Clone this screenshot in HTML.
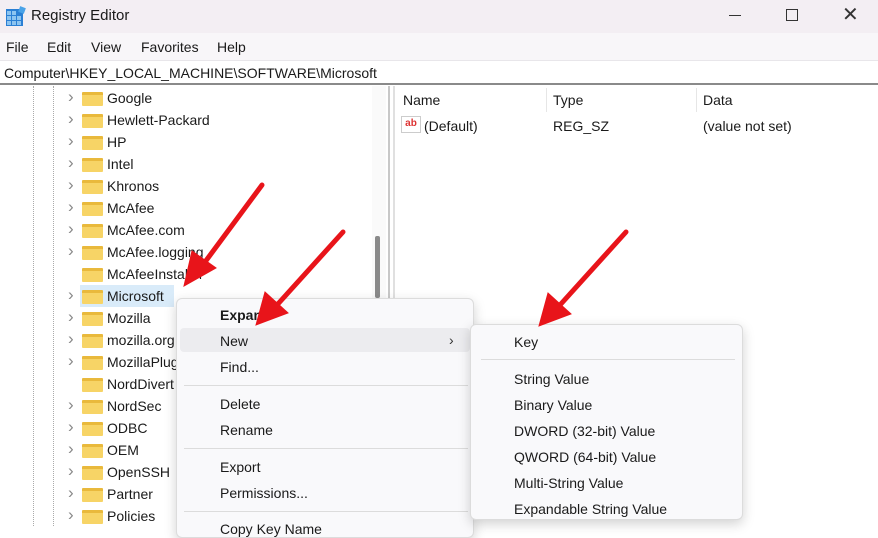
<!DOCTYPE html>
<html><head><meta charset="utf-8"><style>
*{margin:0;padding:0;box-sizing:border-box}
body{width:878px;height:526px;overflow:hidden;background:#fff;font-family:"Liberation Sans",sans-serif;font-size:14px;color:#1a1a1a;position:relative}
.abs{position:absolute;white-space:nowrap}
#title{left:0;top:0;width:878px;height:33px;background:#f3eef3}
#menu{left:0;top:33px;width:878px;height:27px;background:#f8f6f9}
#addr{left:0;top:60px;width:878px;height:25px;background:#fff;border-top:1px solid #e8e6ea;border-bottom:2px solid #8a8a8a}
.row{position:absolute;left:68px;height:22px;line-height:22px;white-space:nowrap}
.row .ch{position:absolute;left:0;top:-1px;color:#888;font-size:17px}
.row .fd{position:absolute;left:14px;top:5px;width:21px;height:14px;background:#f7d466;border-radius:1px;border-top:3px solid #e9b93c}
.row .t{position:absolute;left:39px;top:0;white-space:nowrap}
.cm{background:#f9f9fb;border:1px solid #dcdcdc;border-radius:6px;box-shadow:0 4px 12px rgba(0,0,0,.18)}
.mi{position:absolute;left:43px;white-space:nowrap}
.sep{position:absolute;height:1px;background:#dcdcdc}
</style></head><body>
<div id="title" class="abs">
<svg class="abs" style="left:6px;top:6px" width="20" height="20"><rect x="0" y="3" width="17" height="17" fill="#2a7fd4"/><g fill="#8cc4f0"><rect x="1" y="5" width="4" height="4"/><rect x="6" y="5" width="4" height="4"/><rect x="1" y="10" width="4" height="4"/><rect x="6" y="10" width="4" height="4"/><rect x="11" y="10" width="4" height="4"/><rect x="1" y="15" width="4" height="4"/><rect x="6" y="15" width="4" height="4"/><rect x="11" y="15" width="4" height="4"/></g><rect x="13" y="1" width="6" height="6" fill="#4aa3e8" transform="rotate(20 16 4)"/></svg>
<div class="abs" style="left:31px;top:7px;font-size:15px">Registry Editor</div>
<div class="abs" style="left:729px;top:15px;width:12px;height:1px;background:#333"></div>
<div class="abs" style="left:786px;top:9px;width:12px;height:12px;border:1px solid #333"></div>
<div class="abs" style="left:842px;top:2px;font-size:20px;color:#333">✕</div>
</div>
<div id="menu" class="abs">
<div class="abs" style="left:6px;top:6px">File</div>
<div class="abs" style="left:47px;top:6px">Edit</div>
<div class="abs" style="left:91px;top:6px">View</div>
<div class="abs" style="left:141px;top:6px">Favorites</div>
<div class="abs" style="left:217px;top:6px">Help</div>
</div>
<div id="addr" class="abs"><div class="abs" style="left:4px;top:4px;font-size:14px">Computer\HKEY_LOCAL_MACHINE\SOFTWARE\Microsoft</div></div>
<!-- tree -->
<div class="abs" style="left:33px;top:86px;height:440px;border-left:1px dotted #aaa"></div>
<div class="abs" style="left:53px;top:86px;height:440px;border-left:1px dotted #aaa"></div>
<div class="abs" style="left:372px;top:86px;width:14px;height:440px;background:#fafafa"></div>
<div class="abs" style="left:375px;top:236px;width:5px;height:62px;background:#8a8a8a;border-radius:2px"></div>
<div class="abs" style="left:388px;top:86px;width:2px;height:440px;background:#c8c8c8"></div>
<div class="abs" style="left:393px;top:86px;width:2px;height:440px;background:#e0e0e0"></div>
<div class="abs" style="left:80px;top:285px;width:94px;height:22px;background:#d9ebf9"></div>
<div class="row" style="top:87px"><span class="ch">›</span><span class="fd"></span><span class="t">Google</span></div>
<div class="row" style="top:109px"><span class="ch">›</span><span class="fd"></span><span class="t">Hewlett-Packard</span></div>
<div class="row" style="top:131px"><span class="ch">›</span><span class="fd"></span><span class="t">HP</span></div>
<div class="row" style="top:153px"><span class="ch">›</span><span class="fd"></span><span class="t">Intel</span></div>
<div class="row" style="top:175px"><span class="ch">›</span><span class="fd"></span><span class="t">Khronos</span></div>
<div class="row" style="top:197px"><span class="ch">›</span><span class="fd"></span><span class="t">McAfee</span></div>
<div class="row" style="top:219px"><span class="ch">›</span><span class="fd"></span><span class="t">McAfee.com</span></div>
<div class="row" style="top:241px"><span class="ch">›</span><span class="fd"></span><span class="t">McAfee.logging</span></div>
<div class="row" style="top:263px"><span class="ch"></span><span class="fd"></span><span class="t">McAfeeInstaller</span></div>
<div class="row" style="top:285px"><span class="ch">›</span><span class="fd"></span><span class="t">Microsoft</span></div>
<div class="row" style="top:307px"><span class="ch">›</span><span class="fd"></span><span class="t">Mozilla</span></div>
<div class="row" style="top:329px"><span class="ch">›</span><span class="fd"></span><span class="t">mozilla.org</span></div>
<div class="row" style="top:351px"><span class="ch">›</span><span class="fd"></span><span class="t">MozillaPlugins</span></div>
<div class="row" style="top:373px"><span class="ch"></span><span class="fd"></span><span class="t">NordDivert</span></div>
<div class="row" style="top:395px"><span class="ch">›</span><span class="fd"></span><span class="t">NordSec</span></div>
<div class="row" style="top:417px"><span class="ch">›</span><span class="fd"></span><span class="t">ODBC</span></div>
<div class="row" style="top:439px"><span class="ch">›</span><span class="fd"></span><span class="t">OEM</span></div>
<div class="row" style="top:461px"><span class="ch">›</span><span class="fd"></span><span class="t">OpenSSH</span></div>
<div class="row" style="top:483px"><span class="ch">›</span><span class="fd"></span><span class="t">Partner</span></div>
<div class="row" style="top:505px"><span class="ch">›</span><span class="fd"></span><span class="t">Policies</span></div>
<!-- right pane -->
<div class="abs" style="left:403px;top:92px">Name</div>
<div class="abs" style="left:546px;top:88px;width:1px;height:24px;background:#e6e6e6"></div>
<div class="abs" style="left:553px;top:92px">Type</div>
<div class="abs" style="left:696px;top:88px;width:1px;height:24px;background:#e6e6e6"></div>
<div class="abs" style="left:703px;top:92px">Data</div>
<div class="abs" style="left:401px;top:116px;width:20px;height:17px;border:1px solid #ccc;background:#fff;color:#d33;font-size:10px;font-weight:bold;text-align:center;line-height:13px">ab</div>
<div class="abs" style="left:424px;top:118px">(Default)</div>
<div class="abs" style="left:553px;top:118px">REG_SZ</div>
<div class="abs" style="left:703px;top:118px">(value not set)</div>
<!-- context menu -->
<div class="abs cm" style="left:176px;top:298px;width:298px;height:240px">
<div class="mi" style="top:8px;font-weight:bold">Expand</div>
<div class="abs" style="left:3px;top:29px;width:290px;height:24px;background:#ececef;border-radius:4px"></div>
<div class="mi" style="top:34px">New</div>
<div class="abs" style="left:272px;top:33px;color:#333">›</div>
<div class="mi" style="top:60px">Find...</div>
<div class="sep" style="left:7px;top:86px;width:284px"></div>
<div class="mi" style="top:97px">Delete</div>
<div class="mi" style="top:123px">Rename</div>
<div class="sep" style="left:7px;top:149px;width:284px"></div>
<div class="mi" style="top:160px">Export</div>
<div class="mi" style="top:186px">Permissions...</div>
<div class="sep" style="left:7px;top:212px;width:284px"></div>
<div class="mi" style="top:222px">Copy Key Name</div>
</div>
<div class="abs cm" style="left:470px;top:324px;width:273px;height:196px">
<div class="mi" style="top:9px">Key</div>
<div class="sep" style="left:10px;top:34px;width:254px"></div>
<div class="mi" style="top:46px">String Value</div>
<div class="mi" style="top:72px">Binary Value</div>
<div class="mi" style="top:98px">DWORD (32-bit) Value</div>
<div class="mi" style="top:124px">QWORD (64-bit) Value</div>
<div class="mi" style="top:150px">Multi-String Value</div>
<div class="mi" style="top:176px">Expandable String Value</div>
</div>
<!-- arrows -->
<svg class="abs" style="left:0;top:0" width="878" height="526">
<g fill="#e8141a" stroke="#e8141a" stroke-linecap="round">
<line x1="262" y1="185" x2="205" y2="262" stroke-width="5"/>
<polygon points="184,286 192,251 216,268"/>
<line x1="343" y1="232" x2="277" y2="305" stroke-width="5"/>
<polygon points="256,325 265,292 288,313"/>
<line x1="626" y1="232" x2="560" y2="305" stroke-width="5"/>
<polygon points="539,326 548,293 571,314"/>
</g></svg>
</body></html>
